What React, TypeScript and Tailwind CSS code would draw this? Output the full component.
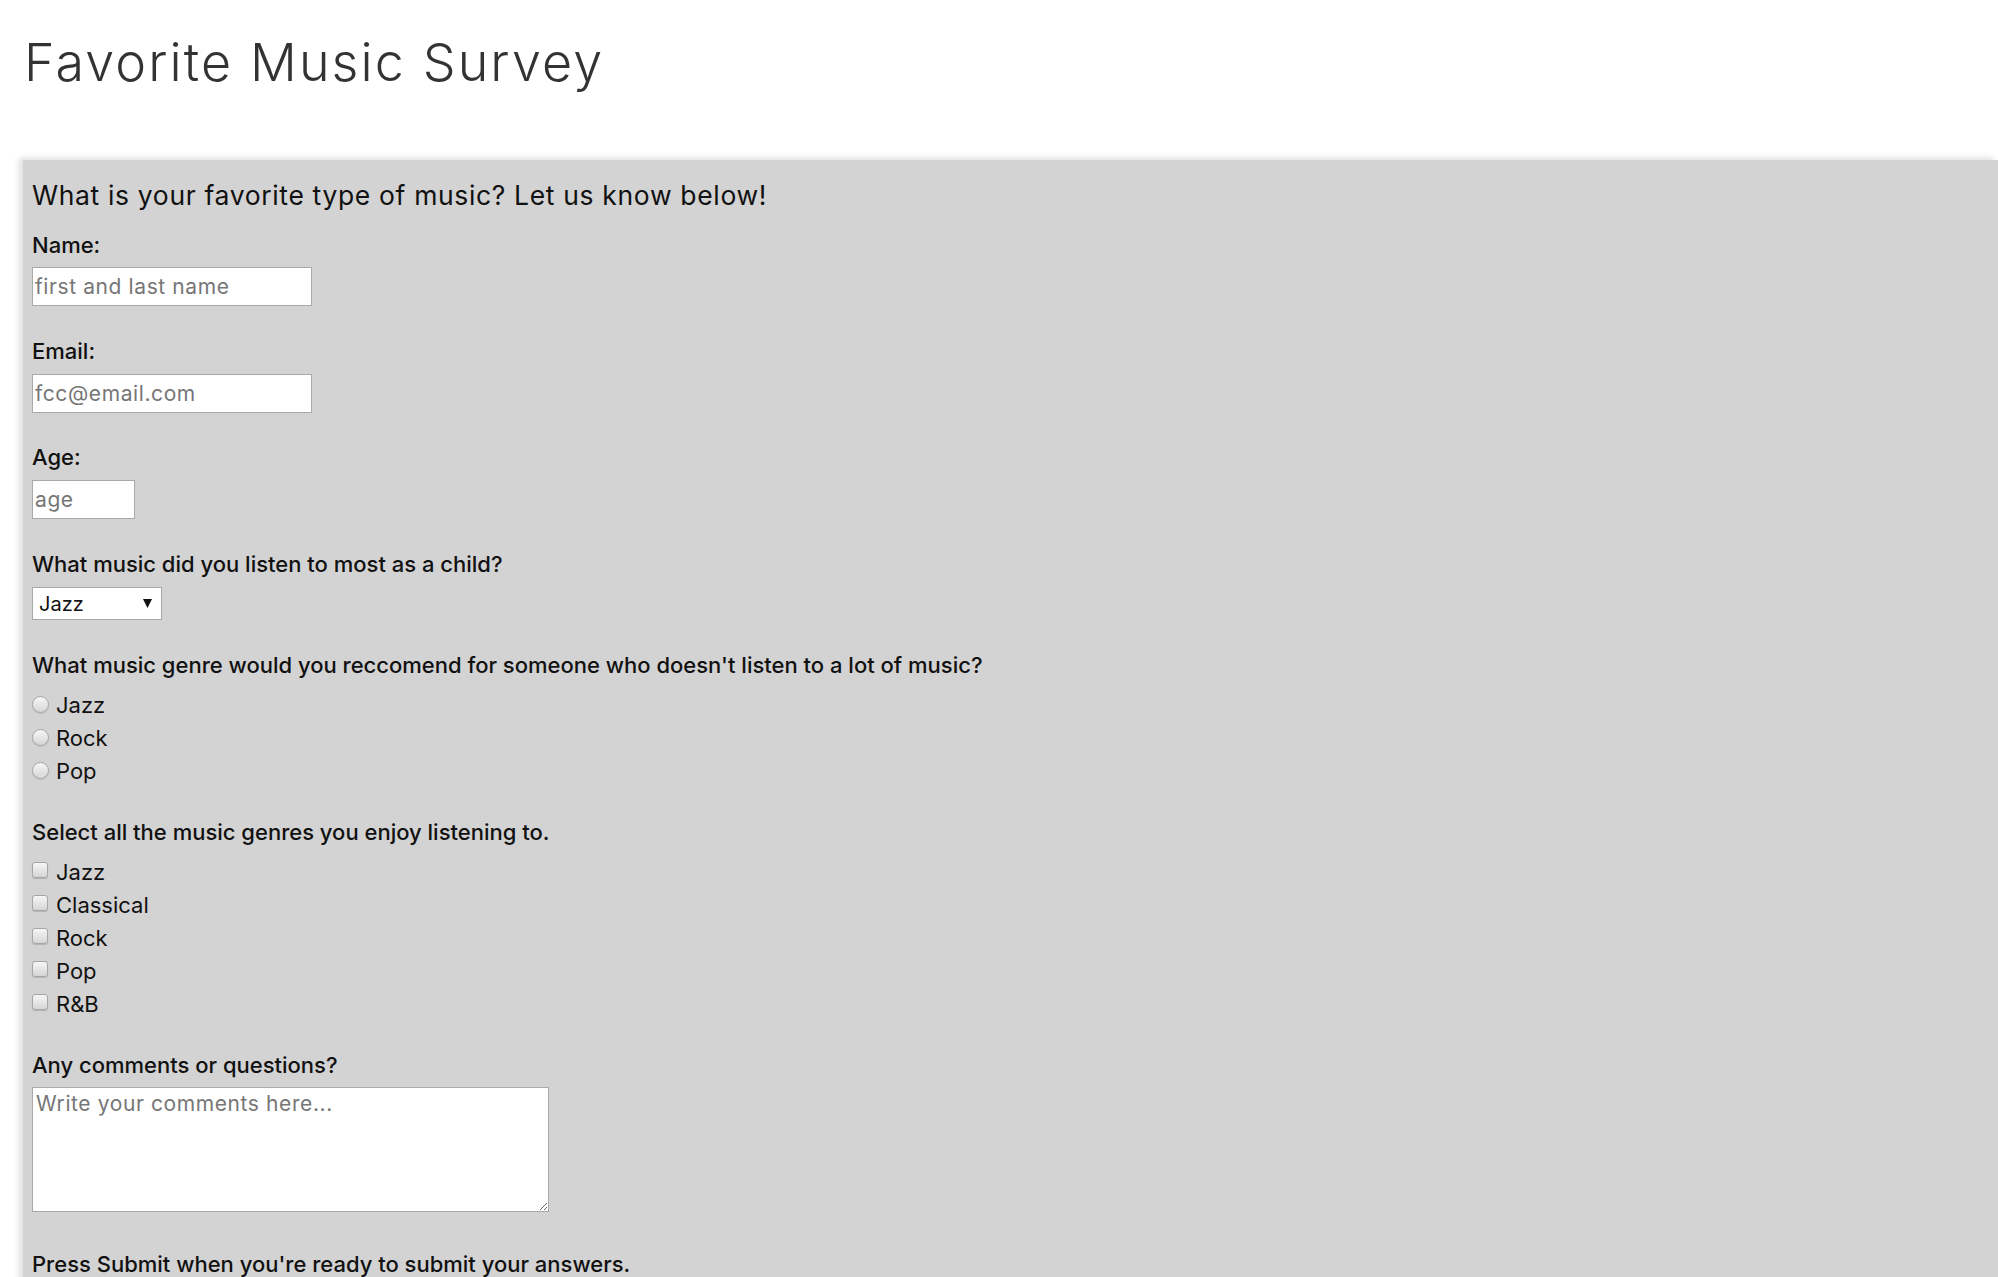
import React from "react";

function Label({ children, className = "" }: { children: React.ReactNode; className?: string }) {
  return (
    <div className={"text-[22px] leading-[28px] font-medium text-[#111] whitespace-nowrap " + className}>
      {children}
    </div>
  );
}

function Radio({ label }: { label: string }) {
  return (
    <label className="flex items-start h-[33px] gap-[7px]">
      <span className="mt-[7px] w-[17px] h-[17px] rounded-full border border-[#a6a6a6] bg-[linear-gradient(180deg,#f6f6f6,#d6d6d6)] shadow-[0_1px_1px_rgba(0,0,0,0.1)]" />
      <span className="text-[22px] leading-[33px] text-[#111]">{label}</span>
    </label>
  );
}

function Check({ label }: { label: string }) {
  return (
    <label className="flex items-start h-[33px] gap-[8px]">
      <span className="mt-[6.5px] w-[16px] h-[16px] rounded-[3px] border border-[#a6a6a6] bg-[linear-gradient(180deg,#f6f6f6,#d6d6d6)] shadow-[0_1px_1px_rgba(0,0,0,0.15)]" />
      <span className="text-[22px] leading-[33px] text-[#111]">{label}</span>
    </label>
  );
}

const fieldText =
  "text-[21px] tracking-[0.6px] text-[#111] placeholder:text-[#767676] placeholder:tracking-[0.6px] outline-none bg-white border border-[#a9a9a9]";

export default function App() {
  return (
    <div className="min-h-screen bg-white font-['Inter',sans-serif] overflow-hidden">
      <h1 className="pl-[24px] pt-[31px] text-[52px] leading-[64px] font-light text-[#333] whitespace-nowrap tracking-[2.1px]">
        Favorite Music Survey
      </h1>
      <form className="mt-[65px] ml-[23px] bg-[#d3d3d3] pl-[9px] pt-[19px] pb-[40px] flex flex-col items-start shadow-[-4px_-2px_6px_rgba(0,0,0,0.13)]">
        <p className="text-[26.5px] leading-[32px] text-[#111] whitespace-nowrap tracking-[0.65px]">
          What is your favorite type of music? Let us know below!
        </p>

        <Label className="mt-[20px]">Name:</Label>
        <input
          type="text"
          placeholder="first and last name"
          className={"mt-[8px] w-[280px] h-[39px] px-[2px] " + fieldText}
        />

        <Label className="mt-[31px]">Email:</Label>
        <input
          type="email"
          placeholder="fcc@email.com"
          className={"mt-[9px] w-[280px] h-[39px] px-[2px] " + fieldText}
        />

        <Label className="mt-[30px]">Age:</Label>
        <input
          type="text"
          placeholder="age"
          className={"mt-[9px] w-[103px] h-[39px] px-[2px] " + fieldText}
        />

        <Label className="mt-[31px]">What music did you listen to most as a child?</Label>
        <div className="relative mt-[9px] w-[130px] h-[33px]">
          <select className="appearance-none w-full h-full bg-white border border-[#a9a9a9] pl-[6px] text-[20px] text-[#111] outline-none">
            <option>Jazz</option>
            <option>Rock</option>
            <option>Pop</option>
          </select>
          <svg className="absolute right-[10px] top-[12px] pointer-events-none" width="9" height="9" viewBox="0 0 9 9">
            <path d="M0 0 L9 0 L4.5 9 Z" fill="#111" />
          </svg>
        </div>

        <Label className="mt-[31px]">
          What music genre would you reccomend for someone who doesn't listen to a lot of music?
        </Label>
        <div className="mt-[9.5px] flex flex-col">
          <Radio label="Jazz" />
          <Radio label="Rock" />
          <Radio label="Pop" />
        </div>

        <Label className="mt-[30.5px]">Select all the music genres you enjoy listening to.</Label>
        <div className="mt-[9.5px] flex flex-col">
          <Check label="Jazz" />
          <Check label="Classical" />
          <Check label="Rock" />
          <Check label="Pop" />
          <Check label="R&B" />
        </div>

        <Label className="mt-[30.5px]">Any comments or questions?</Label>
        <textarea
          placeholder="Write your comments here..."
          className={"mt-[8px] block w-[517px] h-[125px] p-[3px] leading-[26px] " + fieldText}
        />

        <Label className="mt-[38px]">Press Submit when you're ready to submit your answers.</Label>
        <button type="button" className="mt-[10px] px-3 py-1 bg-white border border-[#a9a9a9] text-[20px]">
          Submit
        </button>
      </form>
    </div>
  );
}
